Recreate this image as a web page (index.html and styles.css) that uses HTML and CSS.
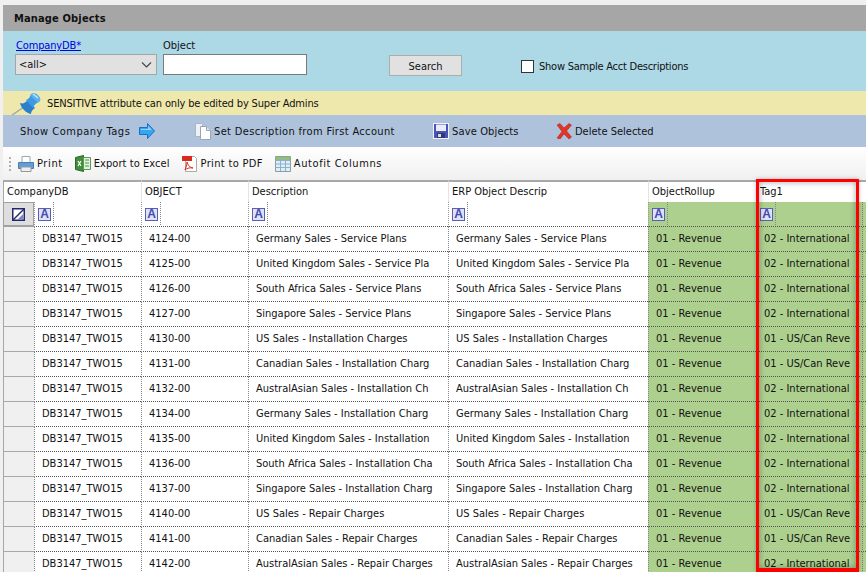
FILE: index.html
```html
<!DOCTYPE html>
<html lang="en">
<head>
<meta charset="utf-8">
<title>Manage Objects</title>
<link rel="stylesheet" href="styles.css">
</head>
<body>
<main class="page">
  <h1 class="title">Manage Objects</h1>
  <section class="search">
    <div class="field company">
      <a class="label link" href="#">CompanyDB*</a>
      <div class="select"><span>&lt;all&gt;</span>
        <svg width="11" height="6" viewBox="0 0 11 6"><path d="M1 .5l4.500 4.500L10 .5" fill="none" stroke="#444" stroke-width="1.100"/></svg>
      </div>
    </div>
    <div class="field object">
      <span class="label">Object</span>
      <div class="input"></div>
    </div>
    <button class="search-btn">Search</button>
    <label class="check"><span class="box"></span><span class="check-text">Show Sample Acct Descriptions</span></label>
  </section>
  <section class="notice">
    <svg class="pin" width="34" height="24" viewBox="0 0 34 24">
      <path d="M2 24L14 16" stroke="#a9a99c" stroke-width="1.500"/>
      <path d="M10 12c3 1 5 0 8-3l7 8c-3 2-4 4-4 6-5-1-10-6-11-11z" fill="#2b7fcb"/>
      <path d="M16 9c3-1 4-3 5-6l8 8c-3 1-5 3-6 6z" fill="#3d9be3"/>
      <path d="M21 3c2-2 5-1 7 1s3 4 2 6-3 1-5-1-5-4-4-6z" fill="#57b2ee"/>
      <path d="M23 3l5 4" stroke="#c6e7fb" stroke-width="1.500"/>
    </svg>
    <span class="notice-text">SENSITIVE attribute can only be edited by Super Admins</span>
  </section>
  <section class="actions">
    <span class="act act-tags"><span class="t-tags">Show Company Tags</span>
      <svg width="16" height="16" viewBox="0 0 16 16"><path d="M.5 4.500h8V.5l7 7.500-7 7.500v-4h-8z" fill="#35a6f2" stroke="#1c6fc0"/><path d="M2 6h7V3l4 4H2z" fill="#8ed2fb"/></svg>
    </span>
    <span class="act act-desc">
      <svg width="16" height="17" viewBox="0 0 16 17"><path d="M.5.5h6l1 1v12h-7z" fill="#eef1f6" stroke="#aab4c4"/><path d="M5.500 3.500h6l4 4v9h-10z" fill="#fff" stroke="#9aa6b8"/><path d="M11.500 3.500v4h4" fill="#dfe5ee" stroke="#9aa6b8"/></svg>
      <span class="t-desc">Set Description from First Account</span></span>
    <span class="act act-save">
      <svg width="16" height="16" viewBox="0 0 16 16"><path d="M0 0h16v16H0z" fill="#f2f2fa"/><path d="M1 1h14v14H1z" fill="#4a52bc"/><path d="M3 1.500h10v6.500H3z" fill="#e8ecfb"/><path d="M4 10h8v5H4z" fill="#333a66"/><path d="M5 11h3v3H5z" fill="#d6d9e8"/></svg>
      <span class="t-save">Save Objects</span></span>
    <span class="act act-del">
      <svg width="16" height="16" viewBox="0 0 16 16"><path d="M1 2l3-1.500 4 4.500L13 .5l2.500 1.500-5 6 5 6-2.500 2-5-5-4 5-3-1 5-6.500z" fill="#e3342a" stroke="#a81c14" stroke-width=".5"/></svg>
      <span>Delete Selected</span></span>
  </section>
  <nav class="toolbar">
    <span class="grip"></span>
    <span class="tool tool-first">
      <svg width="16" height="16" viewBox="0 0 16 16"><path d="M4 .5h8v6H4z" fill="#fff" stroke="#9aa"/><path d="M.5 6.500h15v6H.5z" fill="#5f9fd8" stroke="#4a7fb0"/><path d="M3 11h10v4.500H3z" fill="#eee" stroke="#999"/></svg>
      <span class="t-print">Print</span></span>
    <span class="tool">
      <svg width="16" height="17" viewBox="0 0 16 17"><path d="M.5 2.500l8-2v16l-8-2z" fill="#3f8f3a" stroke="#2a6a28"/><path d="M8.500 2.500h7v12h-7z" fill="#e4f1df" stroke="#5a9a55"/><path d="M3 6l3 5M6 6l-3 5" stroke="#fff" stroke-width="1.200"/><path d="M10 5h4M10 8h4M10 11h4" stroke="#4a9a45"/></svg>
      <span class="t-excel">Export to Excel</span></span>
    <span class="tool">
      <svg width="16" height="17" viewBox="0 0 16 17"><path d="M3.500 1.500h9l2 2v13h-11z" fill="#fff" stroke="#aaa"/><path d="M0 1h10v5H0z" fill="#d92a20"/><path d="M5 7c1 3 2 5 6 6-3-.5-6 0-8 2 1-3 2-5 2-8z" fill="none" stroke="#d92a20"/></svg>
      <span class="t-pdf">Print to PDF</span></span>
    <span class="tool">
      <svg width="16" height="16" viewBox="0 0 16 16"><path d="M.5.500h15v15H.5z" fill="#dceef8" stroke="#8d9ba5"/><path d="M1 1h14v3H1z" fill="#8fc36b"/><path d="M.5 4.500h15M.5 8h15M.5 11.500h15M5.500 1v14M10.500 1v14" stroke="#8fb0c4" fill="none"/></svg>
      <span class="t-fit">Autofit Columns</span></span>
  </nav>
  <div class="grid-wrap">
    <table class="grid">
      <colgroup>
        <col class="c-head"><col class="c-db"><col class="c-obj"><col class="c-desc"><col class="c-desc"><col class="c-roll"><col class="c-tag"><col class="c-end">
      </colgroup>
      <thead>
        <tr class="hdr">
          <th colspan="2">CompanyDB</th><th>OBJECT</th><th>Description</th><th>ERP Object Descrip</th><th>ObjectRollup</th><th>Tag1</th><th class="end-h"></th>
        </tr>
        <tr class="flt">
          <td class="corner"><svg width="13" height="13" viewBox="0 0 13 13"><path d="M.75.750h11.500v11.500H.75z" fill="#fff" stroke="#23276f" stroke-width="1.500"/><path d="M1 12L12 1" stroke="#23276f" stroke-width="1.500"/><path d="M5 12l6-6v6z" fill="#7f85c4"/></svg></td>
          <td><span class="fa">A</span></td><td><span class="fa">A</span></td><td><span class="fa">A</span></td><td><span class="fa">A</span></td>
          <td class="g"><span class="fa">A</span></td><td class="g"><span class="fa">A</span></td><td class="g end"></td>
        </tr>
      </thead>
      <tbody id="rows">
        <tr><td class="rh"></td><td>DB3147_TWO15</td><td>4124-00</td><td>Germany Sales - Service Plans</td><td>Germany Sales - Service Plans</td><td class="g">01 - Revenue</td><td class="g">02 - International</td><td class="g end"></td></tr>
        <tr><td class="rh"></td><td>DB3147_TWO15</td><td>4125-00</td><td>United Kingdom Sales - Service Pla</td><td>United Kingdom Sales - Service Pla</td><td class="g">01 - Revenue</td><td class="g">02 - International</td><td class="g end"></td></tr>
        <tr><td class="rh"></td><td>DB3147_TWO15</td><td>4126-00</td><td>South Africa Sales - Service Plans</td><td>South Africa Sales - Service Plans</td><td class="g">01 - Revenue</td><td class="g">02 - International</td><td class="g end"></td></tr>
        <tr><td class="rh"></td><td>DB3147_TWO15</td><td>4127-00</td><td>Singapore Sales - Service Plans</td><td>Singapore Sales - Service Plans</td><td class="g">01 - Revenue</td><td class="g">02 - International</td><td class="g end"></td></tr>
        <tr><td class="rh"></td><td>DB3147_TWO15</td><td>4130-00</td><td>US Sales - Installation Charges</td><td>US Sales - Installation Charges</td><td class="g">01 - Revenue</td><td class="g">01 - US/Can Reve</td><td class="g end"></td></tr>
        <tr><td class="rh"></td><td>DB3147_TWO15</td><td>4131-00</td><td>Canadian Sales - Installation Charg</td><td>Canadian Sales - Installation Charg</td><td class="g">01 - Revenue</td><td class="g">01 - US/Can Reve</td><td class="g end"></td></tr>
        <tr><td class="rh"></td><td>DB3147_TWO15</td><td>4132-00</td><td>AustralAsian Sales - Installation Ch</td><td>AustralAsian Sales - Installation Ch</td><td class="g">01 - Revenue</td><td class="g">02 - International</td><td class="g end"></td></tr>
        <tr><td class="rh"></td><td>DB3147_TWO15</td><td>4134-00</td><td>Germany Sales - Installation Charg</td><td>Germany Sales - Installation Charg</td><td class="g">01 - Revenue</td><td class="g">02 - International</td><td class="g end"></td></tr>
        <tr><td class="rh"></td><td>DB3147_TWO15</td><td>4135-00</td><td>United Kingdom Sales - Installation</td><td>United Kingdom Sales - Installation</td><td class="g">01 - Revenue</td><td class="g">02 - International</td><td class="g end"></td></tr>
        <tr><td class="rh"></td><td>DB3147_TWO15</td><td>4136-00</td><td>South Africa Sales - Installation Cha</td><td>South Africa Sales - Installation Cha</td><td class="g">01 - Revenue</td><td class="g">02 - International</td><td class="g end"></td></tr>
        <tr><td class="rh"></td><td>DB3147_TWO15</td><td>4137-00</td><td>Singapore Sales - Installation Charg</td><td>Singapore Sales - Installation Charg</td><td class="g">01 - Revenue</td><td class="g">02 - International</td><td class="g end"></td></tr>
        <tr><td class="rh"></td><td>DB3147_TWO15</td><td>4140-00</td><td>US Sales - Repair Charges</td><td>US Sales - Repair Charges</td><td class="g">01 - Revenue</td><td class="g">01 - US/Can Reve</td><td class="g end"></td></tr>
        <tr><td class="rh"></td><td>DB3147_TWO15</td><td>4141-00</td><td>Canadian Sales - Repair Charges</td><td>Canadian Sales - Repair Charges</td><td class="g">01 - Revenue</td><td class="g">01 - US/Can Reve</td><td class="g end"></td></tr>
        <tr><td class="rh"></td><td>DB3147_TWO15</td><td>4142-00</td><td>AustralAsian Sales - Repair Charges</td><td>AustralAsian Sales - Repair Charges</td><td class="g">01 - Revenue</td><td class="g">02 - International</td><td class="g end"></td></tr>
      </tbody>
    </table>
    <div class="highlight"></div>
  </div>
</main>
</body>
</html>
```
FILE: styles.css
```css
* { box-sizing: border-box; }
html, body { margin: 0; height: 572px; overflow: hidden; }
body { background: #f0f0f0; font: 11px/15px "DejaVu Sans", "Noto Sans", sans-serif; font-stretch: condensed; color: #111; }
.page { padding: 5px 0 0 3px; }
.title { margin: 0; height: 26px; padding: 6px 0 0 11px; background: #a6a6a6; font-size: 11px; line-height: 15px; font-weight: 700; color: #111; letter-spacing: .15px; }
.search { height: 60px; background: #add8e6; display: flex; align-items: flex-start; padding: 7px 0 0 12px; }
.field { display: flex; flex-direction: column; }
.label { height: 15px; color: #111; }
.label.link { color: #0000e0; text-decoration: underline; padding-left: 1px; letter-spacing: -.15px; }
.company { width: 148px; }
.object { width: 226px; }
.select { margin-top: 1px; width: 142px; height: 21px; background: #e1e1e1; border: 1px solid #a5a5a5; display: flex; align-items: center; justify-content: space-between; padding: 0 4px 0 3px; }
.input { margin-top: 1px; width: 144px; height: 21px; background: #fff; border: 1px solid #7a7a7a; }
.search-btn { margin-top: 17px; width: 73px; height: 21px; padding: 2px 0 0; background: #e1e1e1; border: 1px solid #adadad; font: inherit; font-stretch: condensed; color: #111; }
.check { margin-top: 21px; margin-left: 59px; display: flex; align-items: center; height: 14px; }
.check-text { letter-spacing: -.24px; }
.box { width: 13px; height: 13px; background: #fff; border: 1px solid #333; margin-right: 5px; }
.notice { height: 24px; background: #efe8ac; display: flex; align-items: center; padding-left: 7px; }
.notice-text { letter-spacing: -.15px; }
.pin { margin-right: 3px; flex: none; }
.actions { height: 32px; background: #aec2dc; display: flex; align-items: center; }
.act { display: inline-flex; align-items: center; white-space: nowrap; }
.act-tags { margin-left: 17px; width: 175px; gap: 9px; }
.act-desc { width: 239px; gap: 3px; }
.act-save { width: 123px; gap: 3px; margin-left: -1px; }
.act-del { gap: 3px; }
.t-tags { letter-spacing: .5px; }
.t-desc { letter-spacing: .35px; }
.t-save { letter-spacing: .15px; }
.toolbar { height: 33px; display: flex; align-items: center; background: linear-gradient(#fff, #f0f0f0); }
.grip { width: 2px; height: 14px; margin-left: 6px; background: repeating-linear-gradient(#b0b0b0 0 2px, transparent 2px 4px); }
.tool { display: inline-flex; align-items: center; gap: 3px; margin-left: 12px; white-space: nowrap; }
.tool-first { margin-left: 7px; }
.t-print { letter-spacing: .6px; }
.t-excel { letter-spacing: .07px; }
.t-pdf { letter-spacing: .33px; }
.t-fit { letter-spacing: .6px; }
.grid-wrap { position: relative; }
.grid { border-collapse: separate; border-spacing: 0; table-layout: fixed; width: 863px; background: #fff; }
.c-head { width: 31px; }
.c-db { width: 107px; }
.c-obj { width: 107px; }
.c-desc { width: 200px; }
.c-roll { width: 108px; }
.c-tag { width: 102px; }
.c-end { width: 8px; }
.grid th, .grid td { overflow: hidden; white-space: nowrap; font-weight: 400; text-align: left; }
.grid .hdr th { height: 22px; padding: 0 0 1px 3px; background: #fff; border-top: 2px solid #a8a8a8; border-left: 1px solid #e4e4e4; vertical-align: middle; }
.grid .hdr th:first-child { border-left: 1px solid #a8a8a8; }
.grid .flt td { height: 25px; padding: 0 0 0 3px; border-left: 1px dotted #999; border-bottom: 1px dotted #555; background-color: #fff; background-image: repeating-linear-gradient(#888 0 1px, transparent 1px 2px); background-size: 1px 100%; background-position: 18px 0; background-repeat: no-repeat; vertical-align: middle; }
.grid .flt td.corner { background: #dedede; border: 1px solid #a0a0a0; border-bottom: 2px solid #a0a0a0; padding: 0 0 0 8px; line-height: 0; }
.grid td.g { background-color: #aed08f; }
.fa { display: block; width: 13px; height: 13px; background: #dfe2f5; border: 1px solid #5a5fb4; color: #4449ae; font: 700 12px/11px "Liberation Sans", sans-serif; text-align: center; overflow: hidden; }
.grid tbody td { height: 25px; padding: 0 0 2px 7px; border-left: 1px dotted #888; border-bottom: 1px dotted #555; vertical-align: middle; }
.grid tbody td.rh { background: #f0f0f0; border-left: 1px solid #a8a8a8; border-bottom: 1px solid #a8a8a8; padding: 0; }
.grid td.end { padding: 0; background-image: repeating-linear-gradient(#777 0 1px, transparent 1px 2px); background-size: 1px 100%; background-position: 3px 0; background-repeat: no-repeat; }
.highlight { position: absolute; left: 753px; top: -1px; width: 103px; height: 393px; border: 3px solid #f00; border-bottom-width: 4px; box-shadow: inset 0 0 6px rgba(0,0,0,.35), 0 0 4px rgba(0,0,0,.25); pointer-events: none; }
```
